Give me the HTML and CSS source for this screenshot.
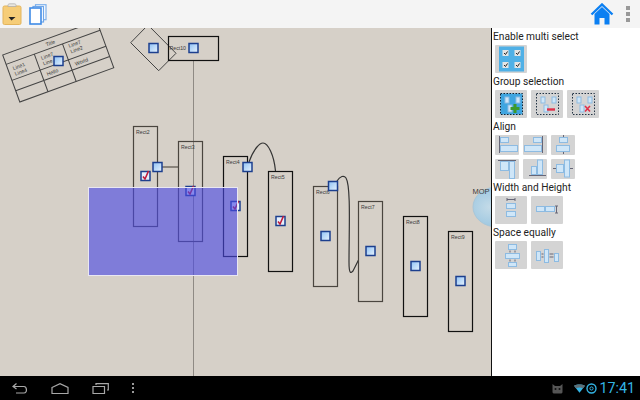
FILE: index.html
```html
<!DOCTYPE html>
<html lang="en">
<head>
  <meta charset="UTF-8">
  <title>Diagram editor</title>
  <link rel="stylesheet" href="styles.css">
</head>
<body>
  <div class="app">
    <div class="toolbar">
      <div class="toolbar-left">
        <svg class="icon-clip" width="20" height="22" viewBox="0 0 20 22">
          <rect x="1" y="3" width="18" height="18.5" rx="1.5" fill="#f6cd78" stroke="#e3b45c"/>
          <path d="M6 3.5V2.2C6 1 7 .8 8 .8h4c1 0 2 .2 2 1.4v1.3z" fill="#e9e7e0" stroke="#aaa" stroke-width=".7"/>
          <path d="M9.500 17.500 6.500 14h7z" fill="#222"/>
        </svg>
        <svg class="icon-pages" width="18" height="21" viewBox="0 0 18 21">
          <rect x="6.500" y=".7" width="10.500" height="15" fill="#fff" stroke="#7db0ea" stroke-width="1.200"/>
          <rect x="4" y="2.500" width="10.500" height="15.500" fill="#fff" stroke="#6ea6e8" stroke-width="1.200"/>
          <rect x="1" y="4" width="11" height="16" fill="#fff" stroke="#3f8be6" stroke-width="1.600"/>
        </svg>
      </div>
      <div class="toolbar-right">
        <svg width="24" height="22" viewBox="0 0 24 22">
          <path d="M1.500 11.500 12 1.500l10.500 10" fill="none" stroke="#0b7ff2" stroke-width="2.400"/>
          <path d="M4.500 11 12 4l7.500 7v10.500h-5V15h-5v6.500h-5z" fill="#0b7ff2"/>
        </svg>
        <div class="overflow"><span></span><span></span><span></span></div>
      </div>
    </div>

    <div class="workspace">
      <svg class="canvas" width="491" height="348" viewBox="0 28 491 348">
        <defs>
          <linearGradient id="handleFill" x1="0" y1="0" x2="1" y2="1">
            <stop offset="0" stop-color="#8fc2f5"/>
            <stop offset="1" stop-color="#e8f3fd"/>
          </linearGradient>
          <radialGradient id="circleFill" cx=".35" cy=".5" r=".7">
            <stop offset="0" stop-color="#c4dbe8"/>
            <stop offset="1" stop-color="#8fc0de"/>
          </radialGradient>
          <g id="handle">
            <rect x="-4.500" y="-4.500" width="9" height="9" fill="url(#handleFill)" stroke="#1c3f8e" stroke-width="1.500"/>
          </g>
          <g id="checked">
            <rect x="-4.500" y="-4.500" width="9" height="9" fill="#e6f0fb" stroke="#1c3f8e" stroke-width="1.500"/>
            <path d="M-2.500 .5-.5 3 3 -5" fill="none" stroke="#c01c3c" stroke-width="1.600"/>
          </g>
        </defs>

        <line class="guide" x1="193.500" y1="60" x2="193.500" y2="376"/>

        <g transform="translate(2.700 55) rotate(-20)">
          <rect class="shape" width="100" height="50"/>
          <path class="shape" d="M0 10H100M0 27H100M0 38H100M30 10V50M60 10V50"/>
          <text class="label" x="44" y="7">Title</text>
          <text class="label" x="5" y="18">Line1</text>
          <text class="label" x="5" y="24">Line4</text>
          <text class="label" x="35" y="18">Line7</text>
          <text class="label" x="35" y="24">Line</text>
          <text class="label" x="65" y="16">Line7</text>
          <text class="label" x="65" y="22">Line2</text>
          <text class="label" x="35" y="35">Hello</text>
          <text class="label" x="65" y="35">World</text>
        </g>

        <path class="shape" d="M148 25 130.700 42.700 158.700 70.700 176 53.300z"/>
        <rect class="rect" x="168.500" y="36.500" width="50" height="24"/>
        <text class="label" x="169.500" y="50">Rect10</text>

        <ellipse cx="497" cy="207" rx="24" ry="20" fill="url(#circleFill)" stroke="#a9c6d8"/>
        <text class="label wide" x="472.500" y="193.500">MOP</text>

        <path class="wire thick" d="M162 167H179"/>
        <path class="wire" d="M249 162C254 148 260 143 263 143 268 143 274 155 275.500 171"/>
        <path class="wire" d="M337 181C340 176 344 175 346 178 351 186 349 230 349 262 349 275 351 273 353 271L358.500 260"/>

        <rect class="rect grey" x="133.500" y="126.500" width="24" height="100"/>
        <rect class="rect grey" x="178.500" y="141.500" width="24" height="100"/>
        <rect class="rect" x="223.500" y="156.500" width="24" height="100"/>
        <rect class="rect" x="268.500" y="171.500" width="24" height="100"/>
        <rect class="rect grey" x="313.500" y="186.500" width="24" height="100"/>
        <rect class="rect grey" x="358.500" y="201.500" width="24" height="100"/>
        <rect class="rect" x="403.500" y="216.500" width="24" height="100"/>
        <rect class="rect" x="448.500" y="231.500" width="24" height="100"/>

        <text class="label" x="136" y="133.500">Rect2</text>
        <text class="label" x="181" y="148.500">Rect3</text>
        <text class="label" x="226" y="163.500">Rect4</text>
        <text class="label" x="271" y="178.500">Rect5</text>
        <text class="label" x="316" y="193.500">Rect6</text>
        <text class="label" x="361" y="208.500">Rect7</text>
        <text class="label" x="406" y="223.500">Rect8</text>
        <text class="label" x="451" y="238.500">Rect9</text>

        <use href="#handle" x="58.500" y="61"/>
        <use href="#handle" x="153.500" y="48"/>
        <use href="#handle" x="193.500" y="48"/>
        <use href="#handle" x="157.500" y="167"/>
        <use href="#handle" x="247.500" y="167"/>
        <use href="#handle" x="333" y="186"/>
        <use href="#checked" x="145.500" y="176"/>
        <use href="#checked" x="190.500" y="191"/>
        <use href="#checked" x="235.500" y="206"/>
        <use href="#checked" x="280.500" y="221"/>
        <use href="#handle" x="325.500" y="236"/>
        <use href="#handle" x="370.500" y="251"/>
        <use href="#handle" x="415.500" y="266"/>
        <use href="#handle" x="460.500" y="281"/>

        <rect class="selection" x="88.500" y="187.500" width="149" height="88"/>
      </svg>

      <div class="panel">
        <div class="panel-label">Enable multi select</div>
        <div class="btn-row">
          <button class="btn">
            <svg width="32" height="28" viewBox="0 0 32 28">
              <rect x="4" y="1.500" width="25" height="25" fill="#4fb0e6"/>
              <g class="tick-box">
                <rect x="7.500" y="5" width="6" height="6"/><rect x="19.500" y="5" width="6" height="6"/>
                <rect x="7.500" y="17" width="6" height="6"/><rect x="19.500" y="17" width="6" height="6"/>
              </g>
              <path class="tick" d="M9 8l1.500 1.500 2-3M21 8l1.500 1.500 2-3M9 20l1.500 1.500 2-3M21 20l1.500 1.500 2-3"/>
            </svg>
          </button>
        </div>

        <div class="panel-label">Group selection</div>
        <div class="btn-row">
          <button class="btn">
            <svg width="32" height="28" viewBox="0 0 32 28">
              <rect x="5.500" y="3.500" width="22" height="21" fill="#3fa5e0" stroke="#123" stroke-dasharray="1.500 1.500"/>
              <rect class="box" x="10" y="7" width="4" height="6"/><rect class="box" x="21" y="7" width="4" height="6"/><rect class="box" x="13" y="15" width="4" height="7"/>
              <path d="M20 14v9M15.500 18.500h9" stroke="#3d9a2c" stroke-width="3"/>
            </svg>
          </button>
          <button class="btn">
            <svg width="32" height="28" viewBox="0 0 32 28">
              <rect x="5.500" y="3.500" width="22" height="21" fill="none" stroke="#234" stroke-dasharray="1.500 1.500"/>
              <rect class="box" x="10" y="7" width="4" height="6"/><rect class="box" x="21" y="7" width="4" height="6"/><rect class="box" x="13" y="15" width="4" height="7"/>
              <path d="M16 19.500h8" stroke="#e0304a" stroke-width="2.400"/>
            </svg>
          </button>
          <button class="btn">
            <svg width="32" height="28" viewBox="0 0 32 28">
              <rect x="5.500" y="3.500" width="22" height="21" fill="none" stroke="#234" stroke-dasharray="1.500 1.500"/>
              <rect class="box" x="10" y="7" width="4" height="6"/><rect class="box" x="21" y="7" width="4" height="6"/><rect class="box" x="13" y="15" width="4" height="7"/>
              <path d="M18 16l5 5.500M23 16l-5 5.500" stroke="#e0304a" stroke-width="1.600"/>
            </svg>
          </button>
        </div>

        <div class="panel-label">Align</div>
        <div class="btn-grid">
          <button class="btn small">
            <svg width="24" height="20" viewBox="0 0 24 20">
              <path class="rule" d="M4.500 1v17"/><rect class="box" x="5.500" y="2.500" width="8" height="5"/><rect class="box" x="5.500" y="10.500" width="17" height="6"/>
            </svg>
          </button>
          <button class="btn small">
            <svg width="24" height="20" viewBox="0 0 24 20">
              <path class="rule" d="M19.500 1v17"/><rect class="box" x="10.500" y="2.500" width="8" height="5"/><rect class="box" x="1.500" y="10.500" width="17" height="6"/>
            </svg>
          </button>
          <button class="btn small">
            <svg width="24" height="20" viewBox="0 0 24 20">
              <path class="rule" d="M12.500 0v3M12.500 17v2"/><rect class="box" x="8.500" y="2.500" width="8" height="5"/><rect class="box" x="5.500" y="10.500" width="13" height="6"/>
            </svg>
          </button>
          <button class="btn small">
            <svg width="24" height="20" viewBox="0 0 24 20">
              <path class="rule" d="M3 1.500h18"/><rect class="box" x="5.500" y="2.500" width="8" height="9"/><rect class="box" x="14.500" y="2.500" width="5" height="17"/>
            </svg>
          </button>
          <button class="btn small">
            <svg width="24" height="20" viewBox="0 0 24 20">
              <path class="rule" d="M6 16.500h17"/><rect class="box" x="8.500" y="7.500" width="5" height="8"/><rect class="box" x="14.500" y="1" width="5" height="14.500"/>
            </svg>
          </button>
          <button class="btn small">
            <svg width="24" height="20" viewBox="0 0 24 20">
              <path class="rule" d="M2 9.500h3M19 9.500h3"/><rect class="box" x="5.500" y="5.500" width="7" height="8"/><rect class="box" x="13.500" y="1" width="5" height="17"/>
            </svg>
          </button>
        </div>

        <div class="panel-label">Width and Height</div>
        <div class="btn-row">
          <button class="btn">
            <svg width="32" height="28" viewBox="0 0 32 28">
              <path class="rule" d="M12 3.500h8M12 2v3M20 2v3"/>
              <rect class="box" x="11.500" y="7.500" width="9" height="5"/><rect class="box" x="11.500" y="15.500" width="9" height="5"/>
            </svg>
          </button>
          <button class="btn">
            <svg width="32" height="28" viewBox="0 0 32 28">
              <rect class="box" x="5.500" y="10.500" width="8" height="5"/><rect class="box" x="14.500" y="10.500" width="9" height="5"/>
              <path class="rule" d="M25.500 10v7M24 10h3M24 17h3"/>
            </svg>
          </button>
        </div>

        <div class="panel-label">Space equally</div>
        <div class="btn-row">
          <button class="btn">
            <svg width="32" height="28" viewBox="0 0 32 28">
              <rect class="box" x="13.500" y="3.500" width="8" height="5"/><rect class="box" x="10.500" y="12.500" width="14" height="5"/><rect class="box" x="13.500" y="21.500" width="8" height="4"/>
              <path class="rule" d="M15 9.500v2M20 9.500v2M15 18.500v2M20 18.500v2"/>
            </svg>
          </button>
          <button class="btn">
            <svg width="32" height="28" viewBox="0 0 32 28">
              <rect class="box" x="5.500" y="10.500" width="4" height="9"/><rect class="box" x="13.500" y="8.500" width="4" height="13"/><rect class="box" x="23.500" y="12.500" width="4" height="8"/>
              <path class="rule" d="M10.500 13h2M10.500 16h2M18.500 13h4M18.500 16h4"/>
            </svg>
          </button>
        </div>
      </div>
    </div>

    <div class="navbar">
      <div class="nav-left">
        <svg width="16" height="11" viewBox="0 0 16 11">
          <path class="nav-stroke" d="M4.500 .5 1 3.500 4.500 6M1.500 3.500h10.500c3 0 3.500 6.500 0 6.500H4"/>
        </svg>
        <svg width="18" height="11" viewBox="0 0 18 11">
          <path class="nav-stroke" d="M1 4.500 9 .7l8 3.800v6H1z"/>
        </svg>
        <svg width="17" height="11" viewBox="0 0 17 11">
          <path class="nav-stroke" d="M4 2V.7h12.300V7h-1.300M1 3.500h11.500v7H1z"/>
        </svg>
        <div class="nav-dots"><span></span><span></span><span></span></div>
      </div>
      <div class="status">
        <svg width="11" height="11" viewBox="0 0 11 11"><path d="M.5 1 3 3h5l2.500-2v8c0 1-1 1.500-2 1.500H2.500c-1 0-2-.5-2-1.500z" fill="#555"/><circle cx="3.500" cy="6" r="1" fill="#111"/><circle cx="7.500" cy="6" r="1" fill="#111"/></svg>
        <svg class="wifi" width="11" height="9" viewBox="0 0 12 9"><path d="M0 1.500C3.500-.5 8.500-.5 12 1.500L6 9z" fill="#33b5e5"/><path d="M0 1.500C3.500-.5 8.500-.5 12 1.500L9.800 4.300C7.500 3.200 4.500 3.200 2.200 4.300z" fill="#5f6f76"/></svg>
        <svg class="sync" width="11" height="11" viewBox="0 0 11 11"><circle cx="5.500" cy="5.500" r="4.500" fill="none" stroke="#33b5e5" stroke-width="1.400"/><circle cx="5.500" cy="5.500" r="1.600" fill="none" stroke="#33b5e5"/></svg>
        <span class="clock">17:41</span>
      </div>
    </div>
  </div>
</body>
</html>
```

FILE: styles.css
```css
body {
  margin: 0;
  font-family: Roboto, sans-serif;
  background-color: #000;
}

.app {
  width: 640px;
  height: 400px;
  display: flex;
  flex-direction: column;
  overflow: hidden;
}

.toolbar {
  height: 28px;
  background-color: #f4f4f4;
  display: flex;
  align-items: center;
  justify-content: space-between;
  flex-shrink: 0;
}

.toolbar-left {
  display: flex;
  align-items: center;
  gap: 7px;
  padding-left: 2px;
}

.toolbar-right {
  display: flex;
  align-items: center;
  gap: 12px;
  padding-right: 10px;
}

.overflow {
  display: flex;
  flex-direction: column;
  gap: 2px;
}

.overflow span {
  width: 4px;
  height: 4px;
  background-color: #999;
}

.workspace {
  flex: 1;
  display: flex;
  min-height: 0;
}

.canvas {
  display: block;
  background-color: #d6d0c8;
  flex-shrink: 0;
}

.shape {
  fill: none;
  stroke: #444;
  stroke-width: 1;
}

.rect {
  fill: none;
  stroke: #111;
  stroke-width: 1.2;
}

.rect.grey {
  stroke: #4a453f;
}

.guide {
  stroke: #8f8a84;
  stroke-width: 1;
}

.wire {
  fill: none;
  stroke: #333;
  stroke-width: 1.2;
}

.wire.thick {
  stroke: #77716a;
  stroke-width: 1.6;
}

.label {
  font-family: "Liberation Sans", sans-serif;
  font-size: 5.2px;
  fill: #3a3a3a;
}

.label.wide {
  font-size: 7.5px;
}

.selection {
  fill: rgba(75, 72, 228, 0.62);
  stroke: #e9e7f2;
  stroke-width: 1;
}

.panel {
  flex: 1;
  background-color: #fff;
  border-left: 1px solid #111;
  padding-left: 1px;
}

.panel-label {
  height: 17px;
  line-height: 18px;
  font-size: 10.2px;
  color: #222;
}

.btn-row {
  display: flex;
  gap: 4px;
  padding-left: 2px;
}

.btn-grid {
  display: grid;
  grid-template-columns: repeat(3, 24px);
  gap: 4px;
  padding-left: 2px;
}

.btn {
  width: 32px;
  height: 28px;
  padding: 0;
  border: none;
  background-color: #d4d4d4;
  border-radius: 1px;
  display: block;
}

.btn svg {
  display: block;
}

.btn.small {
  width: 24px;
  height: 20px;
}

.box {
  fill: #cfe6f8;
  stroke: #8dbbe2;
  stroke-width: 1;
}

.rule {
  fill: none;
  stroke: #667;
  stroke-width: 1;
}

.tick-box {
  fill: #e4e4e4;
}

.tick {
  fill: none;
  stroke: #222;
  stroke-width: 1;
}

.navbar {
  height: 24px;
  background-color: #000;
  display: flex;
  align-items: center;
  justify-content: space-between;
  flex-shrink: 0;
}

.nav-left {
  display: flex;
  align-items: center;
  gap: 23px;
  padding-left: 12px;
}

.nav-stroke {
  fill: none;
  stroke: #a8a8a8;
  stroke-width: 1.2;
}

.nav-dots {
  display: flex;
  flex-direction: column;
  gap: 2px;
}

.nav-dots span {
  width: 2px;
  height: 2px;
  background-color: #999;
}

.status {
  display: flex;
  align-items: center;
  gap: 1px;
  padding-right: 5px;
}

.wifi {
  margin-left: 10px;
}

.clock {
  color: #33b5e5;
  font-size: 14.3px;
  margin-left: 1px;
}
```
